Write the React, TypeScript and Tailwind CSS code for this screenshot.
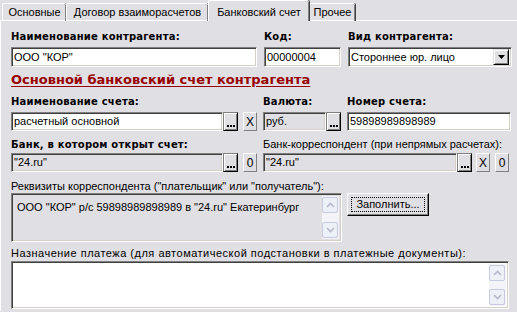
const sans = "font-['Liberation_Sans',Arial,sans-serif] text-[11px] text-black";
const bold = "font-['DejaVu_Sans',Verdana,sans-serif] font-bold text-[10px] tracking-[0.2px] text-black";
const sunken =
  'border border-t-[#808080] border-l-[#808080] border-b-white border-r-white shadow-[inset_1px_1px_0_#404040,inset_-1px_-1px_0_#d4d0c8]';

function Label({ children, b = true, className = '' }: { children: React.ReactNode; b?: boolean; className?: string }) {
  return <div className={`${b ? bold : sans} h-[13px] leading-[13px] whitespace-nowrap ${className}`}>{children}</div>;
}

function Input({ value, w, gray = false }: { value: string; w: string; gray?: boolean }) {
  return (
    <div className={`${sunken} ${w} h-full flex items-center pl-[2px] ${gray ? 'bg-[#e0dfe3]' : 'bg-white'} ${sans} whitespace-nowrap overflow-hidden`}>
      {value}
    </div>
  );
}

function DotsBtn() {
  return (
    <div className="w-[15px] h-full bg-[#e0dfe3] border border-t-[#808080] border-l-[#808080] border-b-black border-r-black shadow-[inset_1px_1px_0_#fff,inset_-1px_-1px_0_#808080] flex items-end justify-center pb-[3px]">
      <div className="flex gap-[1px]">
        <span className="w-[2px] h-[2px] bg-black" />
        <span className="w-[2px] h-[2px] bg-black" />
        <span className="w-[2px] h-[2px] bg-black" />
      </div>
    </div>
  );
}

function FlatBtn({ t }: { t: string }) {
  return (
    <div className={`w-[14px] h-full border border-t-white border-l-white border-b-[#808080] border-r-[#808080] flex items-center justify-center ${sans} text-[12px] font-light`}>
      {t}
    </div>
  );
}

function ScrollBar() {
  const btn = 'w-[16px] h-[16px] rounded-[2px] border border-[#c6cbe0] bg-[#eef0f7] flex items-center justify-center';
  return (
    <div className="w-[17px] h-full flex flex-col justify-between bg-[#f3f3f8] py-[1px]">
      <div className={btn}>
        <svg width="9" height="6" viewBox="0 0 9 6">
          <path d="M1 5 L4.5 1.5 L8 5" stroke="#b4b9cc" strokeWidth="1.6" fill="none" />
        </svg>
      </div>
      <div className={btn}>
        <svg width="9" height="6" viewBox="0 0 9 6">
          <path d="M1 1 L4.5 4.5 L8 1" stroke="#b4b9cc" strokeWidth="1.6" fill="none" />
        </svg>
      </div>
    </div>
  );
}

function Tab({ t, w, active = false }: { t: string; w: string; active?: boolean }) {
  return (
    <div
      className={`${w} ${active ? 'h-[21px] pt-[2px] relative z-10 bg-[#e0dfe3]' : 'h-[18px] mt-[3px]'} border-l border-t border-white rounded-tl-[2px] rounded-tr-[2px] shadow-[inset_-1px_0_0_#808080,1px_0_0_#404040] flex items-center justify-center ${sans}`}
    >
      {t}
    </div>
  );
}

export default function App() {
  return (
    <div className="w-[517px] h-[312px] bg-[#e0dfe3] overflow-hidden">
      <div className="flex pl-[2px] h-[21px]">
        <Tab t="Основные" w="w-[64px]" />
        <Tab t="Договор взаиморасчетов" w="w-[142px]" />
        <Tab t="Банковский счет" w="w-[101px]" active />
        <Tab t="Прочее" w="w-[46px]" />
      </div>
      <div className="border-t border-l border-white h-[291px] -mt-[1px] pl-[10px] pt-[9px]">
        <div className="flex">
          <div className="w-[253px]">
            <Label>Наименование контрагента:</Label>
          </div>
          <div className="w-[84px]">
            <Label>Код:</Label>
          </div>
          <Label>Вид контрагента:</Label>
        </div>
        <div className="flex h-[20px] mt-[4px]">
          <Input value={'ООО "КОР"'} w="w-[246px]" />
          <div className="ml-[7px]">
            <Input value="00000004" w="w-[77px]" />
          </div>
          <div className={`${sunken} ml-[7px] w-[164px] h-full bg-white flex items-center justify-between pl-[2px] pr-[2px] ${sans}`}>
            <span>Стороннее юр. лицо</span>
            <div className="w-[16px] h-[16px] bg-[#e0dfe3] border border-t-[#e0dfe3] border-l-[#e0dfe3] border-b-black border-r-black shadow-[inset_1px_1px_0_#fff,inset_-1px_-1px_0_#808080] flex items-center justify-center">
              <svg width="7" height="4" viewBox="0 0 7 4">
                <path d="M0 0 H7 L3.5 4 Z" fill="#000" />
              </svg>
            </div>
          </div>
        </div>
        <div className="mt-[5px] h-[16px] leading-[16px] font-['DejaVu_Sans',Verdana,sans-serif] font-bold text-[13px] text-[#990000] underline underline-offset-[2px] whitespace-nowrap">
          Основной банковский счет контрагента
        </div>
        <div className="flex mt-[7px]">
          <div className="w-[252px]">
            <Label>Наименование счета:</Label>
          </div>
          <div className="w-[84px]">
            <Label>Валюта:</Label>
          </div>
          <Label>Номер счета:</Label>
        </div>
        <div className="flex h-[19px] mt-[4px]">
          <Input value="расчетный основной" w="w-[212px]" />
          <DotsBtn />
          <div className="ml-[5px]">
            <FlatBtn t="X" />
          </div>
          <div className="ml-[6px] flex h-full">
            <Input value="руб." w="w-[63px]" gray />
            <DotsBtn />
          </div>
          <div className="ml-[6px]">
            <Input value="59898989898989" w="w-[164px]" />
          </div>
        </div>
        <div className="flex mt-[7px]">
          <div className="w-[252px]">
            <Label>Банк, в котором открыт счет:</Label>
          </div>
          <Label b={false}>Банк-корреспондент (при непрямых расчетах):</Label>
        </div>
        <div className="flex h-[19px] mt-[2px]">
          <Input value={'"24.ru"'} w="w-[212px]" gray />
          <DotsBtn />
          <div className="ml-[5px]">
            <FlatBtn t="0" />
          </div>
          <div className="ml-[6px]">
            <Input value={'"24.ru"'} w="w-[194px]" gray />
          </div>
          <DotsBtn />
          <div className="ml-[4px]">
            <FlatBtn t="X" />
          </div>
          <div className="ml-[5px]">
            <FlatBtn t="0" />
          </div>
        </div>
        <Label b={false} className="mt-[8px]">
          Реквизиты корреспондента ("плательщик" или "получатель"):
        </Label>
        <div className="flex mt-[0px]">
          <div className={`${sunken} w-[331px] h-[49px] bg-[#e0dfe3] flex p-[2px]`}>
            <div className={`flex-1 pl-[3px] pt-[3px] ${sans} whitespace-nowrap`}>
              ООО "КОР" р/с 59898989898989 в "24.ru" Екатеринбург
            </div>
            <ScrollBar />
          </div>
          <div className="ml-[5px] w-[82px] h-[23px] bg-[#e0dfe3] border border-t-white border-l-white border-b-black border-r-black shadow-[inset_-1px_-1px_0_#808080] p-[3px]">
            <div className={`w-full h-full border border-dotted border-black flex items-center justify-center ${sans}`}>
              Заполнить...
            </div>
          </div>
        </div>
        <Label b={false} className="mt-[5px] tracking-[0.5px]">
          Назначение платежа (для автоматической подстановки в платежные документы):
        </Label>
        <div className={`${sunken} mt-[1px] w-[498px] h-[48px] bg-white flex justify-end p-[2px]`}>
          <ScrollBar />
        </div>
      </div>
    </div>
  );
}
